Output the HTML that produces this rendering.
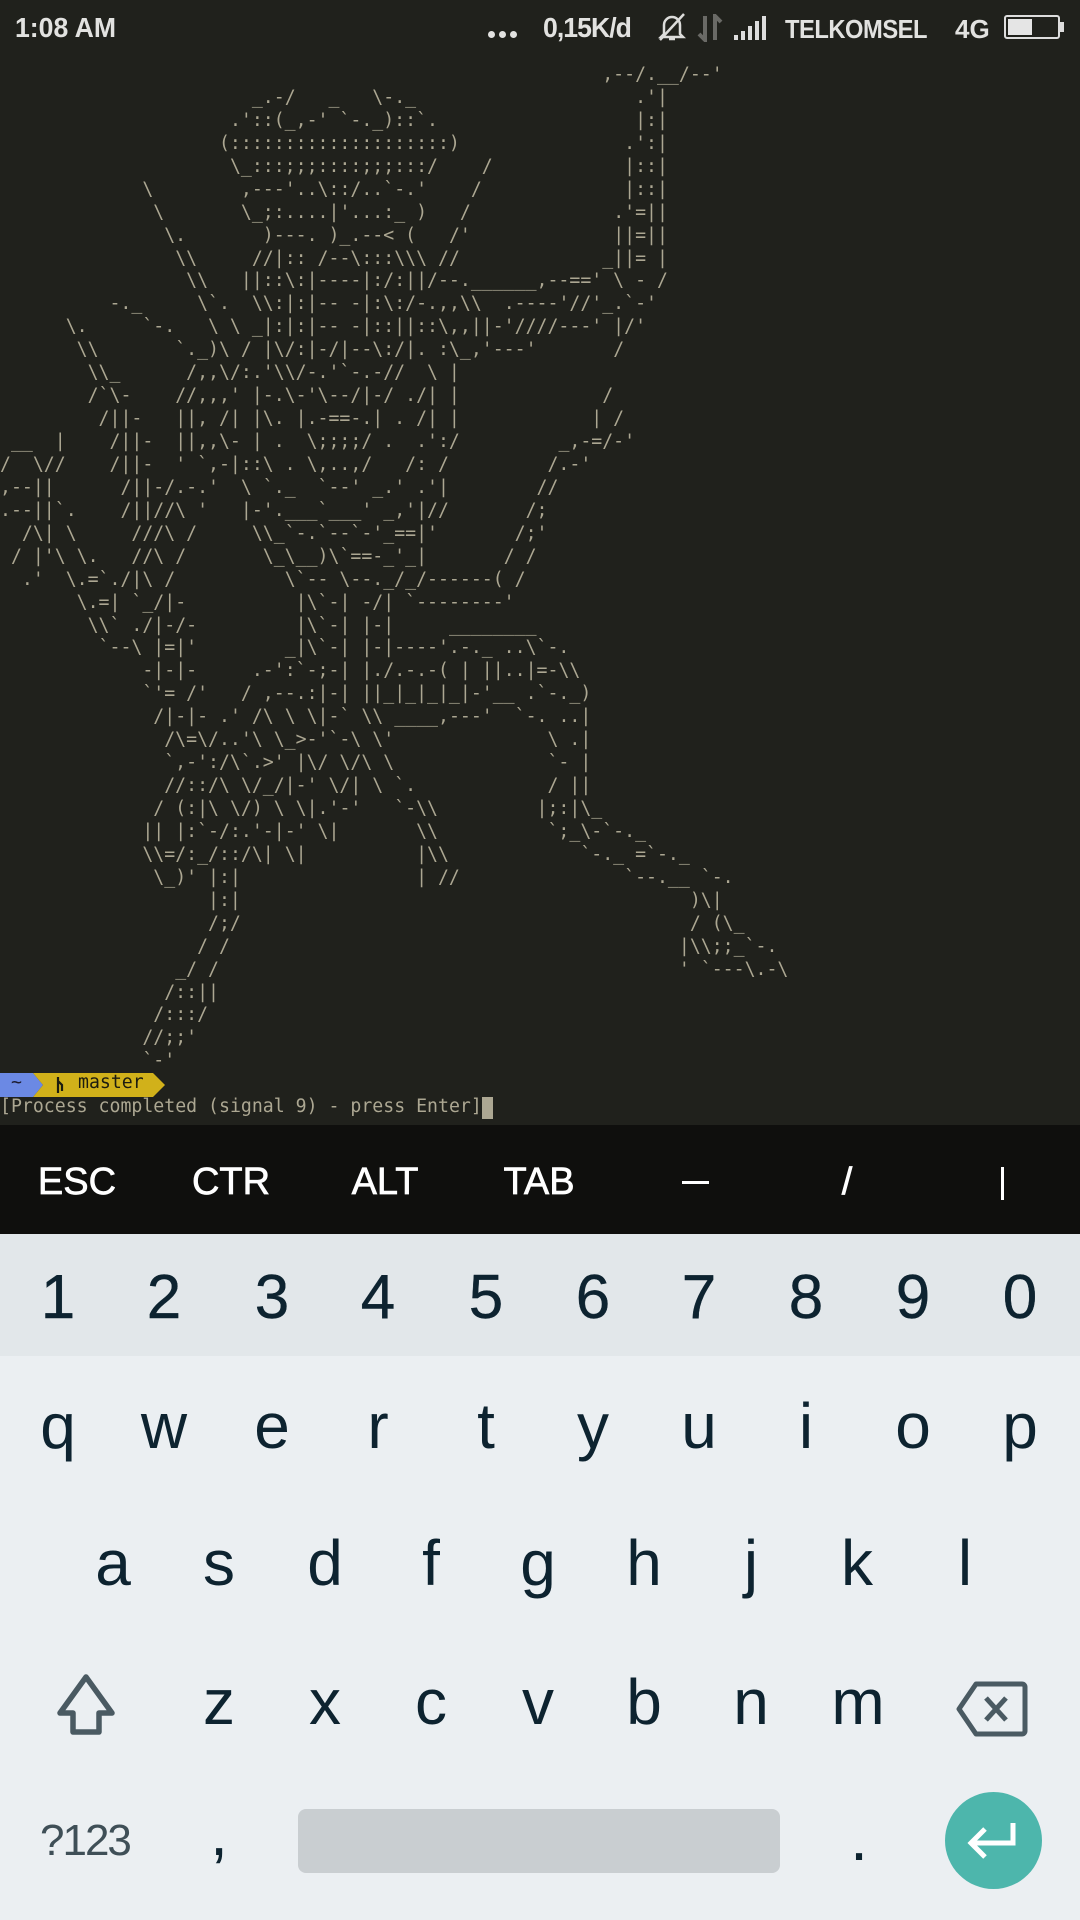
<!DOCTYPE html>
<html><head><meta charset="utf-8"><style>
*{margin:0;padding:0;box-sizing:border-box}
html,body{width:1080px;height:1920px;overflow:hidden;background:#20211c}
body{position:relative;font-family:"Liberation Sans",sans-serif}
.a{position:absolute;white-space:pre}
#term{position:absolute;left:0;top:64px;width:1080px;font-family:"DejaVu Sans Mono",monospace;font-size:18.2px;color:#aca792}
.l{position:relative;height:22.95px;line-height:22.95px;white-space:pre}
.l i{position:absolute;top:0;font-style:normal;white-space:pre}
.sb{color:#e2e2e0;font-weight:bold;font-size:28px;line-height:28px;top:14px}
.xk{color:#fff;font-size:38px;line-height:38px;top:1163px;width:154px;text-align:center;-webkit-text-stroke:0.7px #fff}
.k{color:#0d2330;font-size:64px;line-height:64px;width:108px;text-align:center}
.d{color:#0d2330;font-size:62px;line-height:62px;width:108px;text-align:center;top:1267px;-webkit-text-stroke:0.4px #0d2330}
</style></head><body>
<!-- status bar -->
<div class="a sb" style="left:15px;transform:scaleX(0.95);transform-origin:left">1:08 AM</div>
<div class="a" style="left:488px;top:31px;width:7px;height:7px;border-radius:50%;background:#e2e2e0"></div>
<div class="a" style="left:499px;top:31px;width:7px;height:7px;border-radius:50%;background:#e2e2e0"></div>
<div class="a" style="left:510px;top:31px;width:7px;height:7px;border-radius:50%;background:#e2e2e0"></div>
<div class="a sb" style="left:543px;letter-spacing:-1px;transform:scaleX(0.95);transform-origin:left">0,15K/d</div>
<svg class="a" style="left:656px;top:12px" width="32" height="30" viewBox="0 0 32 30"><path d="M8 22 V13 a8 8 0 0 1 16 0 V22 l3 3 H5 Z M13 27 h6" fill="none" stroke="#dcdcda" stroke-width="2.5"/><path d="M4 28 L28 2" stroke="#dcdcda" stroke-width="2.5"/></svg>
<svg class="a" style="left:696px;top:14px" width="28" height="28" viewBox="0 0 28 28"><path d="M9 2 V26 L3 20 M19 26 V2 L25 8" fill="none" stroke="#6a6a66" stroke-width="4"/></svg>
<svg class="a" style="left:734px;top:16px" width="36" height="24" viewBox="0 0 36 24"><rect x="0" y="19" width="4" height="5" fill="#ddd"/><rect x="7" y="15" width="4" height="9" fill="#ddd"/><rect x="14" y="10" width="4" height="14" fill="#ddd"/><rect x="21" y="5" width="4" height="19" fill="#ddd"/><rect x="28" y="0" width="4" height="24" fill="#ddd"/></svg>
<div class="a sb" style="left:785px;font-size:25.5px;letter-spacing:-0.5px;top:16px;transform:scaleX(0.93);transform-origin:left">TELKOMSEL</div>
<div class="a sb" style="left:955px;font-size:26px;top:15px">4G</div>
<div class="a" style="left:1004px;top:15px;width:56px;height:24px;border:2px solid #ddd;border-radius:3px"><div style="position:absolute;left:2px;top:2px;width:24px;height:16px;background:#e5e5e5"></div></div>
<div class="a" style="left:1060px;top:22px;width:4px;height:10px;background:#ddd"></div>

<div id="term">
<div class="l"><i style="left:55ch">,--/.__/--'</i></div>
<div class="l"><i style="left:23ch">_.-/   _   \-._</i><i style="left:58ch">.'|</i></div>
<div class="l"><i style="left:21ch">.'::(_,-' `-._)::`.</i><i style="left:58ch">|:|</i></div>
<div class="l"><i style="left:20ch">(::::::::::::::::::::)</i><i style="left:57ch">.':|</i></div>
<div class="l"><i style="left:21ch">\_:::;;;::::;;;:::/</i><i style="left:44ch">/</i><i style="left:57ch">|::|</i></div>
<div class="l"><i style="left:13ch">\</i><i style="left:22ch">,---'..\::/..`-.'</i><i style="left:43ch">/</i><i style="left:57ch">|::|</i></div>
<div class="l"><i style="left:14ch">\</i><i style="left:22ch">\_;:....|'...:_ )</i><i style="left:42ch">/</i><i style="left:56ch">.'=||</i></div>
<div class="l"><i style="left:15ch">\.</i><i style="left:24ch">)---. )_.--&lt; (</i><i style="left:41ch">/'</i><i style="left:56ch">||=||</i></div>
<div class="l"><i style="left:16ch">\\</i><i style="left:23ch">//|:: /--\:::\\\ //</i><i style="left:55ch">_||= |</i></div>
<div class="l"><i style="left:17ch">\\</i><i style="left:22ch">||::\:|----|:/:||/--.______,--==' \ - /</i></div>
<div class="l"><i style="left:10ch">-._</i><i style="left:18ch">\`.</i><i style="left:23ch">\\:|:|-- -|:\:/-.,,\\  .----'//'_.`-'</i></div>
<div class="l"><i style="left:6ch">\.</i><i style="left:13ch">`-.</i><i style="left:19ch">\ \ _|:|:|-- -|::||::\,,||-'////---' |/'</i></div>
<div class="l"><i style="left:7ch">\\</i><i style="left:16ch">`._)\ / |\/:|-/|--\:/|. :\_,'---'</i><i style="left:56ch">/</i></div>
<div class="l"><i style="left:8ch">\\_</i><i style="left:17ch">/,,\/:.'\\/-.'`-.-//  \ |</i></div>
<div class="l"><i style="left:8ch">/`\-</i><i style="left:16ch">//,,,' |-.\-'\--/|-/ ./| |</i><i style="left:55ch">/</i></div>
<div class="l"><i style="left:9ch">/||-</i><i style="left:16ch">||, /| |\. |.-==-.| . /| |</i><i style="left:54ch">| /</i></div>
<div class="l"><i style="left:1ch">__</i><i style="left:5ch">|</i><i style="left:10ch">/||-</i><i style="left:16ch">||,,\- | .  \;;;;/ .  .':/</i><i style="left:51ch">_,-=/-'</i></div>
<div class="l"><i style="left:0ch">/</i><i style="left:3ch">\//</i><i style="left:10ch">/||-</i><i style="left:16ch">' `,-|::\ . \,..,/   /: /</i><i style="left:50ch">/.-'</i></div>
<div class="l"><i style="left:0ch">,--||</i><i style="left:11ch">/||-/.-.'</i><i style="left:22ch">\ `._  `--' _.' .'|</i><i style="left:49ch">//</i></div>
<div class="l"><i style="left:0ch">.--||`.</i><i style="left:11ch">/||//\ '</i><i style="left:22ch">|-'.___`___' _,'|//</i><i style="left:48ch">/;</i></div>
<div class="l"><i style="left:2ch">/\| \</i><i style="left:12ch">///\ /</i><i style="left:23ch">\\_`-.`--`-'_==|'</i><i style="left:47ch">/;'</i></div>
<div class="l"><i style="left:1ch">/ |'\ \.</i><i style="left:12ch">//\ /</i><i style="left:24ch">\_\__)\`==-_'_|</i><i style="left:46ch">/ /</i></div>
<div class="l"><i style="left:2ch">.'</i><i style="left:6ch">\.=`./|\ /</i><i style="left:26ch">\`-- \--._/_/------( /</i></div>
<div class="l"><i style="left:7ch">\.=| `_/|-</i><i style="left:27ch">|\`-| -/| `--------'</i></div>
<div class="l"><i style="left:8ch">\\` ./|-/-</i><i style="left:27ch">|\`-| |-|</i><i style="left:41ch">________</i></div>
<div class="l"><i style="left:9ch">`--\ |=|'</i><i style="left:26ch">_|\`-| |-|----'.-._ ..\`-.</i></div>
<div class="l"><i style="left:13ch">-|-|-</i><i style="left:23ch">.-':`-;-| |./.-.-( | ||..|=-\\</i></div>
<div class="l"><i style="left:13ch">`'= /'</i><i style="left:22ch">/ ,--.:|-| ||_|_|_|_|-'__ .`-._)</i></div>
<div class="l"><i style="left:14ch">/|-|- .' /\ \ \|-` \\ ____,---'  `-. ..|</i></div>
<div class="l"><i style="left:15ch">/\=\/..'\ \_&gt;-'`-\ \'</i><i style="left:50ch">\ .|</i></div>
<div class="l"><i style="left:15ch">`,-':/\`.&gt;' |\/ \/\ \</i><i style="left:50ch">`- |</i></div>
<div class="l"><i style="left:15ch">//::/\ \/_/|-' \/| \ `.</i><i style="left:50ch">/ ||</i></div>
<div class="l"><i style="left:14ch">/ (:|\ \/) \ \|.'-'   `-\\</i><i style="left:49ch">|;:|\_</i></div>
<div class="l"><i style="left:13ch">|| |:`-/:.'-|-' \|</i><i style="left:38ch">\\</i><i style="left:50ch">`;_\-`-._</i></div>
<div class="l"><i style="left:13ch">\\=/:_/::/\| \|</i><i style="left:38ch">|\\</i><i style="left:53ch">`-._ =`-._</i></div>
<div class="l"><i style="left:14ch">\_)' |:|</i><i style="left:38ch">| //</i><i style="left:57ch">`--.__ `-.</i></div>
<div class="l"><i style="left:19ch">|:|</i><i style="left:63ch">)\|</i></div>
<div class="l"><i style="left:19ch">/;/</i><i style="left:63ch">/ (\_</i></div>
<div class="l"><i style="left:18ch">/ /</i><i style="left:62ch">|\\;;_`-.</i></div>
<div class="l"><i style="left:16ch">_/ /</i><i style="left:62ch">' `---\.-\</i></div>
<div class="l"><i style="left:15ch">/::||</i></div>
<div class="l"><i style="left:14ch">/:::/</i></div>
<div class="l"><i style="left:13ch">//;;'</i></div>
<div class="l"><i style="left:13ch">`-'</i></div>
<div class="l">
<svg style="position:absolute;left:0;top:0" width="170" height="24" viewBox="0 0 170 24"><path d="M0 0 H33 L43 12 L33 24 H0 Z" fill="#6b89e4"/><path d="M33 0 H153 L165 12 L153 24 H33 L43 12 Z" fill="#d1b11a"/><path d="M58 4 V20 M58 8 L62 12 V18" stroke="#1c1c10" stroke-width="2.2" fill="none"/></svg>
<i style="left:1ch;color:#1c1c30;top:-1px">~</i><i style="left:78px;color:#1c1c10;top:-1px">master</i></div>
<div class="l"><i style="left:0">[Process completed (signal 9) - press Enter]</i><i style="left:44ch;top:1px;width:11px;height:22px;background:#aca792"></i></div>
</div>

<!-- extra keys -->
<div class="a" style="left:0;top:1125px;width:1080px;height:109px;background:#0f0f0d"></div>
<div class="a xk" style="left:0">ESC</div>
<div class="a xk" style="left:154px">CTR</div>
<div class="a xk" style="left:308px">ALT</div>
<div class="a xk" style="left:462px">TAB</div>
<div class="a" style="left:682px;top:1181px;width:27px;height:3px;background:#fff"></div>
<div class="a xk" style="left:770px">/</div>
<div class="a" style="left:1001px;top:1167px;width:3px;height:33px;background:#fff"></div>

<!-- keyboard -->
<div class="a" style="left:0;top:1234px;width:1080px;height:122px;background:#e2e7ea"></div>
<div class="a" style="left:0;top:1356px;width:1080px;height:564px;background:#ebeff2"></div>
<div class="a d" style="left:4px">1</div><div class="a d" style="left:110px">2</div><div class="a d" style="left:218px">3</div><div class="a d" style="left:324px">4</div><div class="a d" style="left:432px">5</div><div class="a d" style="left:539px">6</div><div class="a d" style="left:645px">7</div><div class="a d" style="left:752px">8</div><div class="a d" style="left:859px">9</div><div class="a d" style="left:966px">0</div>

<div class="a k" style="left:4px;top:1394px">q</div><div class="a k" style="left:110px;top:1394px">w</div><div class="a k" style="left:218px;top:1394px">e</div><div class="a k" style="left:324px;top:1394px">r</div><div class="a k" style="left:432px;top:1394px">t</div><div class="a k" style="left:539px;top:1394px">y</div><div class="a k" style="left:645px;top:1394px">u</div><div class="a k" style="left:752px;top:1394px">i</div><div class="a k" style="left:859px;top:1394px">o</div><div class="a k" style="left:966px;top:1394px">p</div>

<div class="a k" style="left:59px;top:1531px">a</div><div class="a k" style="left:165px;top:1531px">s</div><div class="a k" style="left:271px;top:1531px">d</div><div class="a k" style="left:377px;top:1531px">f</div><div class="a k" style="left:484px;top:1531px">g</div><div class="a k" style="left:590px;top:1531px">h</div><div class="a k" style="left:697px;top:1531px">j</div><div class="a k" style="left:803px;top:1531px">k</div><div class="a k" style="left:911px;top:1531px">l</div>

<svg class="a" style="left:55px;top:1673px" width="62" height="63" viewBox="0 0 62 63"><path d="M31 4 L57 40 H44 V59 H18 V40 H5 Z" fill="none" stroke="#4a5a62" stroke-width="5.5" stroke-linejoin="round"/></svg>
<div class="a k" style="left:165px;top:1670px">z</div><div class="a k" style="left:271px;top:1670px">x</div><div class="a k" style="left:377px;top:1670px">c</div><div class="a k" style="left:484px;top:1670px">v</div><div class="a k" style="left:590px;top:1670px">b</div><div class="a k" style="left:697px;top:1670px">n</div><div class="a k" style="left:804px;top:1670px">m</div>
<svg class="a" style="left:956px;top:1681px" width="72" height="56" viewBox="0 0 72 56"><path d="M20 3 H66 a3 3 0 0 1 3 3 V50 a3 3 0 0 1 -3 3 H20 L3 28 Z" fill="none" stroke="#4a5a62" stroke-width="5" stroke-linejoin="round"/><path d="M30 17 L50 39 M50 17 L30 39" stroke="#4a5a62" stroke-width="5"/></svg>

<div class="a" style="left:40px;top:1819px;font-size:44px;line-height:44px;color:#3f4f57;letter-spacing:-2px">?123</div>
<div class="a k" style="left:165px;top:1801px">,</div>
<div class="a" style="left:298px;top:1809px;width:482px;height:64px;background:#c9ced1;border-radius:8px"></div>
<div class="a k" style="left:805px;top:1806px">.</div>
<div class="a" style="left:945px;top:1792px;width:97px;height:97px;border-radius:50%;background:#4db6ac"></div>
<svg class="a" style="left:963px;top:1817px" width="60" height="46" viewBox="0 0 60 46"><path d="M50 6 V26 H10 M22 12 L8 26 L22 40" fill="none" stroke="#fff" stroke-width="5"/></svg>
</body></html>
